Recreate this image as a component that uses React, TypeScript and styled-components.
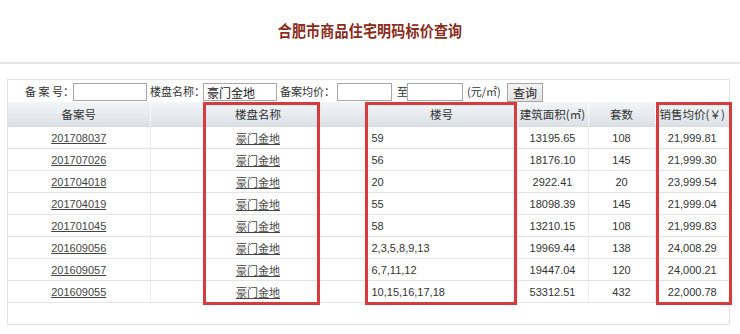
import React from "react";
import styled, { createGlobalStyle } from "styled-components";

const GlobalStyle = createGlobalStyle`
  html, body { margin: 0; padding: 0; background: #fff; }
  body {
    font-family: "Liberation Sans", "Noto Sans CJK SC", sans-serif;
    color: #333;
  }
`;

const TitleBar = styled.header`
  height: 62px;
  border-bottom: 2px solid #e6e6e6;
  display: flex;
  align-items: center;
  justify-content: center;
  box-sizing: content-box;
`;

const Title = styled.h1`
  margin: 0 0 3px 0;
  font-family: "Noto Sans CJK SC", sans-serif;
  font-size: 14px;
  font-weight: 700;
  color: #8a2c1b;
  white-space: nowrap;
  letter-spacing: 0.2px;
  transform: scaleY(1.1);
`;

const Panel = styled.section`
  position: relative;
  margin: 15px 0 0 7px;
  width: 723px;
  height: 246px;
  box-sizing: border-box;
  border: 1px solid #e3e3e3;
`;

const SearchBar = styled.form`
  height: 22px;
  display: flex;
  align-items: center;
  padding-left: 17px;
  font-size: 11px;
  color: #333;
  font-family: "Noto Sans CJK SC", sans-serif;
`;

const Label = styled.span<{ $w: number; $pl?: number }>`
  width: ${(p) => p.$w}px;
  padding-left: ${(p) => p.$pl ?? 0}px;
  box-sizing: border-box;
  white-space: nowrap;
  flex: none;
`;

const Input = styled.input<{ $w: number }>`
  width: ${(p) => p.$w}px;
  height: 18px;
  box-sizing: border-box;
  border: 1px solid #a8a8a8;
  padding: 0 3px;
  font-size: 12px;
  font-family: "Noto Sans CJK SC", sans-serif;
  color: #222;
  flex: none;
  margin-top: 2px;
`;

const Button = styled.button`
  width: 36px;
  height: 19px;
  padding: 0;
  margin-top: 2px;
  border: 1px solid #a5a5a5;
  background: linear-gradient(#f4f4f4, #e2e2e2);
  font-size: 12px;
  font-family: "Noto Sans CJK SC", sans-serif;
  color: #222;
  flex: none;
`;

const Table = styled.table`
  width: 721px;
  border-collapse: collapse;
  table-layout: fixed;
  font-size: 11px;
`;

const HeadCell = styled.th`
  height: 24px;
  padding: 0;
  font-weight: 400;
  font-size: 11.5px;
  font-family: "Noto Sans CJK SC", sans-serif;
  color: #333;
  text-align: center;
  background: linear-gradient(#f3f5f7, #dce1e7);
  border-left: 1px solid #f7f8fa;
  border-bottom: 1px solid #d8dce2;
  &:first-child { border-left: none; }
`;

const Cell = styled.td<{ $align?: string }>`
  height: 21px;
  padding: 0 5px;
  text-align: ${(p) => p.$align ?? "center"};
  border-bottom: 1px solid #e4e4e4;
  border-left: 1px solid #ececec;
  color: #333;
  white-space: nowrap;
  &:first-child { border-left: none; }
`;

const CellLink = styled.a`
  color: #444;
  text-decoration: underline;
  font-family: "Liberation Sans", "Noto Sans CJK SC", sans-serif;
`;

const Mark = styled.div<{ $l: number; $w: number }>`
  position: absolute;
  left: ${(p) => p.$l}px;
  top: 22px;
  width: ${(p) => p.$w}px;
  height: 203px;
  box-sizing: border-box;
  border: 3px solid #d83b3e;
  pointer-events: none;
`;

const rows = [
  ["201708037", "59", "13195.65", "108", "21,999.81"],
  ["201707026", "56", "18176.10", "145", "21,999.30"],
  ["201704018", "20", "2922.41", "20", "23,999.54"],
  ["201704019", "55", "18098.39", "145", "21,999.04"],
  ["201701045", "58", "13210.15", "108", "21,999.83"],
  ["201609056", "2,3,5,8,9,13", "19969.44", "138", "24,008.29"],
  ["201609057", "6,7,11,12", "19447.04", "120", "24,000.21"],
  ["201609055", "10,15,16,17,18", "53312.51", "432", "22,000.78"],
];

const widths = [142, 216, 151, 71, 67, 74];

export default function App() {
  return (
    <>
      <GlobalStyle />
      <TitleBar>
        <Title>合肥市商品住宅明码标价查询</Title>
      </TitleBar>
      <Panel>
        <SearchBar onSubmit={(e) => e.preventDefault()}>
          <Label $w={48}>备 案 号：</Label>
          <Input $w={74} defaultValue="" />
          <Label $w={56} $pl={3}>楼盘名称：</Label>
          <Input $w={74} defaultValue="豪门金地" />
          <Label $w={60} $pl={3}>备案均价：</Label>
          <Input $w={55} defaultValue="" />
          <Label $w={15} $pl={5}>至</Label>
          <Input $w={56} defaultValue="" />
          <Label $w={44} $pl={4}>(元/㎡)</Label>
          <Button type="submit">查询</Button>
        </SearchBar>
        <Table>
          <colgroup>
            {widths.map((w, i) => (
              <col key={i} style={{ width: w }} />
            ))}
          </colgroup>
          <thead>
            <tr>
              <HeadCell>备案号</HeadCell>
              <HeadCell>楼盘名称</HeadCell>
              <HeadCell>楼号</HeadCell>
              <HeadCell>建筑面积(㎡)</HeadCell>
              <HeadCell>套数</HeadCell>
              <HeadCell>销售均价(￥)</HeadCell>
            </tr>
          </thead>
          <tbody>
            {rows.map((r) => (
              <tr key={r[0]}>
                <Cell>
                  <CellLink href="#">{r[0]}</CellLink>
                </Cell>
                <Cell>
                  <CellLink href="#">豪门金地</CellLink>
                </Cell>
                <Cell $align="left">{r[1]}</Cell>
                <Cell>{r[2]}</Cell>
                <Cell>{r[3]}</Cell>
                <Cell>{r[4]}</Cell>
              </tr>
            ))}
          </tbody>
        </Table>
        <Mark $l={195} $w={117} />
        <Mark $l={357} $w={152} />
        <Mark $l={648} $w={76} />
      </Panel>
    </>
  );
}
